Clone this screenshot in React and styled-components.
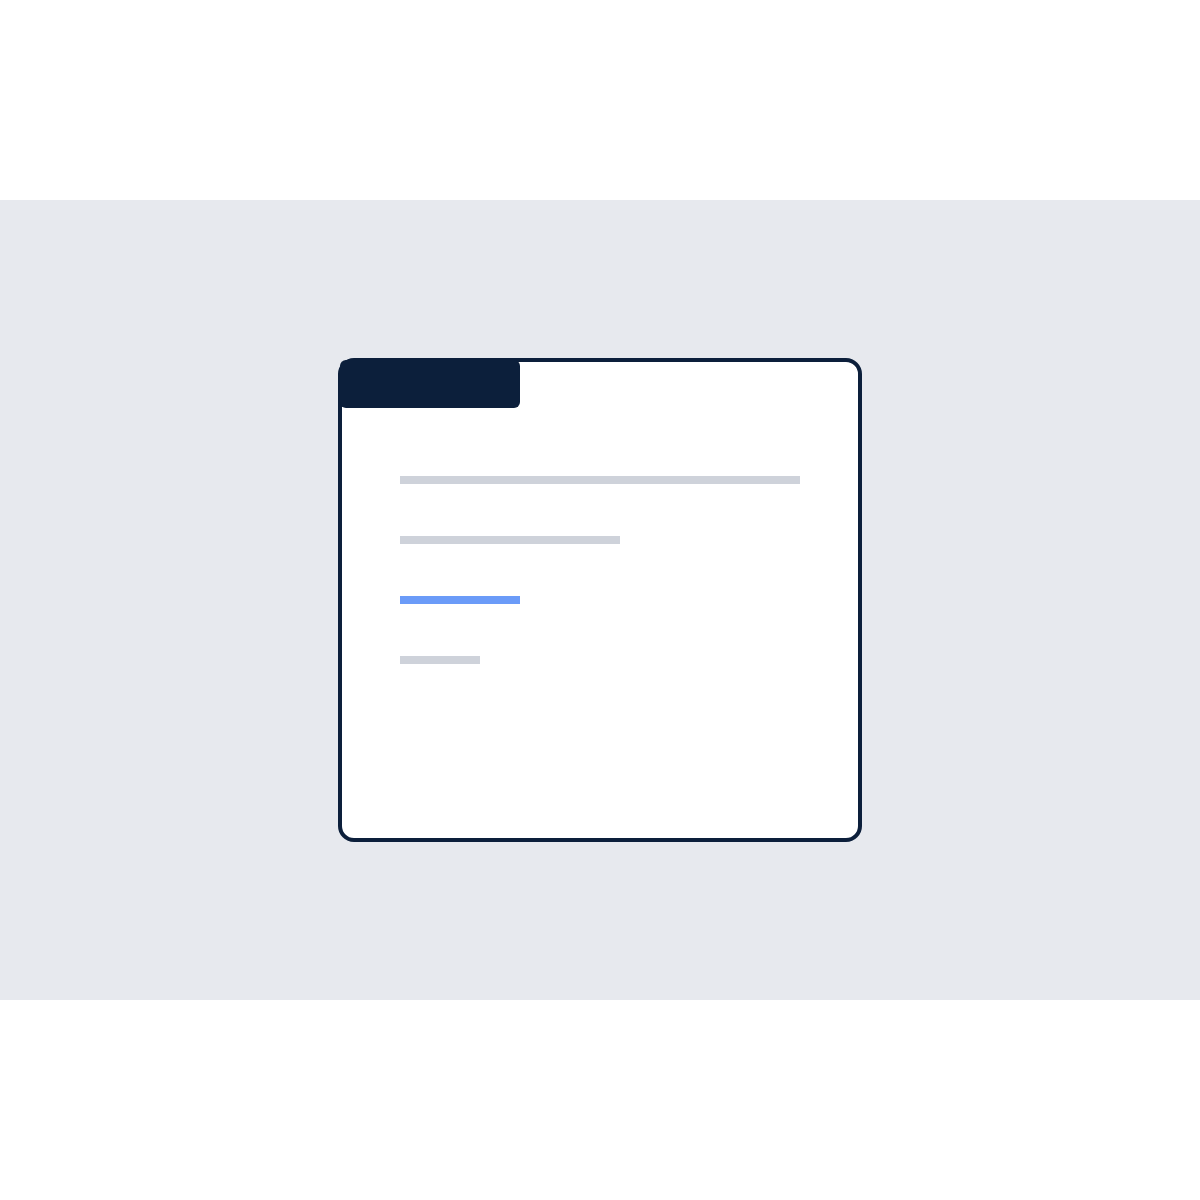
import React from 'react';
import styled, { createGlobalStyle } from 'styled-components';

const GlobalStyle = createGlobalStyle`
    html, body {
        margin: 0;
        padding: 0;
        background: #ffffff;
        font-family: 'Inter', 'Liberation Sans', sans-serif;
    }
`

const Page = styled.div`
    width: 100%;
    height: 1200px;
    padding-top: 200px;
    box-sizing: border-box;
    background: #ffffff;
`

const Band = styled.section`
    height: 800px;
    background: #e7e9ee;
    display: flex;
    align-items: center;
    justify-content: center;
`

const Window = styled.div`
    position: relative;
    width: 524px;
    height: 484px;
    box-sizing: border-box;
    border: 4px solid #0c1f3b;
    border-radius: 16px;
    background: #ffffff;
    padding: 114px 58px 0;
    display: flex;
    flex-direction: column;
    gap: 52px;
`

// dark tab sitting over the top-left corner of the window
const Tab = styled.div`
    position: absolute;
    top: -2px;
    left: -2px;
    width: 180px;
    height: 48px;
    border-radius: 6px;
    background: #0c1f3b;
`

const Bar = styled.div`
    height: 8px;
    width: ${p => p.width}px;
    background: ${p => (p.active ? '#6b9bf8' : '#ced2da')};
`

const bars = [
    { width: 400 },
    { width: 220 },
    { width: 120, active: true },
    { width: 80 },
]

const App = () => {
    return (
        <>
            <GlobalStyle />
            <Page>
                <Band>
                    <Window>
                        <Tab />
                        {bars.map((b, i) => (
                            <Bar key={i} width={b.width} active={b.active} />
                        ))}
                    </Window>
                </Band>
            </Page>
        </>
    )
}

export default App;
